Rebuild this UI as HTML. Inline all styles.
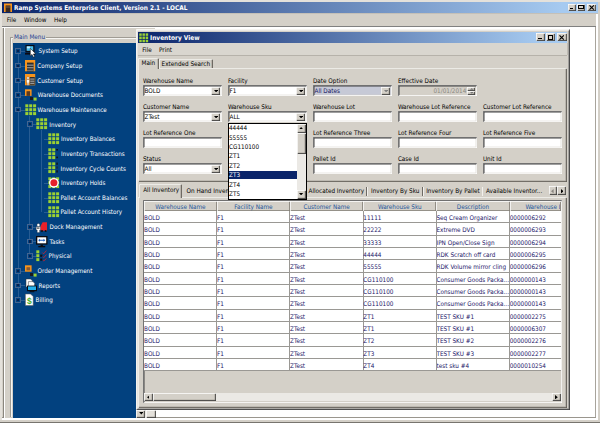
<!DOCTYPE html>
<html><head><meta charset="utf-8"><title>Ramp Systems Enterprise Client</title>
<style>
html,body{margin:0;padding:0;background:#d4d0c8;overflow:hidden}
#root{position:relative;width:600px;height:423px;overflow:hidden;font-family:"DejaVu Sans Condensed","Liberation Sans",sans-serif;font-size:6.33px}
#root div,#root svg{position:absolute}
.t{white-space:nowrap}
.btn{background:#d4d0c8;box-shadow:inset 0.7px 0.7px 0 #fff, inset -0.65px -0.65px 0 #404040, inset -1.3px -1.3px 0 #8a867e}
</style></head><body><div id="root">
<div class="" style="left:0px;top:0px;width:600px;height:423px;background:#d4d0c8"></div>
<div class="" style="left:0px;top:0px;width:2px;height:423px;background:#e4e1db"></div>
<div class="" style="left:0px;top:0px;width:600px;height:1.6px;background:#e4e1db"></div>
<div class="" style="left:2px;top:2px;width:596px;height:11.2px;background:linear-gradient(90deg,#0a246a 0%,#a6caf0 94%)"></div>
<div class="" style="left:2px;top:13.2px;width:596px;height:0.8px;background:#c4c0b8"></div>
<svg class="a" style="left:4px;top:3px" width="9" height="10" viewBox="0 0 9 10"><rect x="0" y="0.5" width="8" height="8.5" fill="#f7941d"/><rect x="1.6" y="2.4" width="4.8" height="6.6" fill="#3a2a20"/><rect x="1.6" y="3.6" width="4.8" height="0.8" fill="#8a6a50"/></svg>
<div class="t" style="left:14px;top:2.60px;line-height:10px;font-size:6.45px;color:#fff;font-weight:bold;">Ramp Systems Enterprise Client, Version 2.1 - LOCAL</div>
<div class="a btn" style="left:567.5px;top:3.7px;width:8px;height:7.5px"></div>
<div class="a btn" style="left:577px;top:3.7px;width:8.4px;height:7.5px"></div>
<div class="a btn" style="left:587.2px;top:3.7px;width:9px;height:7.5px"></div>
<div class="a" style="left:569.5px;top:8.1px;width:3.4px;height:1.3px;background:#000"></div>
<div class="a" style="left:578.3px;top:4.9px;width:5.4px;height:4.5px;border:0.6px solid #000;border-top:1.3px solid #000;box-sizing:border-box"></div>
<svg class="a" style="left:588.50px;top:4.75px" width="5.4" height="5" viewBox="0 0 5.4 5"><path d="M0.5 0.4 L4.9 4.6 M4.9 0.4 L0.5 4.6" stroke="#000" stroke-width="1.15"/></svg>
<div class="t" style="left:6.8px;top:15.20px;line-height:10px;font-size:6.33px;color:#000;">File</div>
<div class="t" style="left:24px;top:15.20px;line-height:10px;font-size:6.33px;color:#000;">Window</div>
<div class="t" style="left:54px;top:15.20px;line-height:10px;font-size:6.33px;color:#000;">Help</div>
<div class="" style="left:2px;top:25.6px;width:596px;height:0.9px;background:#808080"></div>
<div class="" style="left:2px;top:26.5px;width:596px;height:1.5px;background:#fff"></div>
<div class="" style="left:3px;top:28px;width:592px;height:390px;background:#fff"></div>
<div class="" style="left:595px;top:27px;width:1.4px;height:392px;background:#a8a49c"></div>
<div class="" style="left:2px;top:417.4px;width:596px;height:0.9px;background:#9a968e"></div>
<div class="" style="left:2px;top:418.3px;width:596px;height:1.7px;background:#fff"></div>
<div class="" style="left:0px;top:420px;width:600px;height:3px;background:#d4d0c8"></div>
<div class="" style="left:0px;top:422.2px;width:600px;height:0.8px;background:#77746e"></div>
<div class="" style="left:596px;top:14px;width:1.5px;height:406px;background:#fff"></div>
<div class="" style="left:3px;top:28px;width:152px;height:390px;background:#d4d0c8"></div>
<div class="" style="left:3px;top:28px;width:1px;height:390px;background:#8a867e"></div>
<div class="" style="left:4px;top:28px;width:1.4px;height:390px;background:#fff"></div>
<div class="" style="left:9.5px;top:37px;width:139px;height:380.4px;border:0.9px solid #a09c94;border-bottom:none;box-shadow:1px 1px 0 #f6f5f2 inset, 1px 0 0 #f6f5f2;box-sizing:border-box;"></div>
<div class="" style="left:13px;top:33px;width:32.5px;height:8px;background:#d4d0c8"></div>
<div class="t" style="left:14px;top:31.90px;line-height:10px;font-size:6.33px;color:#1c3f94;">Main Menu</div>
<div class="" style="left:12.7px;top:43.4px;width:123.6px;height:374.2px;background:#02417f"></div>
<div class="" style="left:136px;top:43px;width:9.5px;height:375px;background:#e9e7e2"></div>
<div class="a btn" style="left:136.3px;top:409.6px;width:9px;height:8px"></div>
<svg class="a" style="left:138.6px;top:412.4px" width="4.6" height="2.6" viewBox="0 0 5 3"><path d="M0 0 L5 0 L2.5 3 Z" fill="#000"/></svg>
<div class="a btn" style="left:145.6px;top:409.6px;width:10px;height:8px;background:#e4e1db"></div>
<div class="" style="left:17.7px;top:51.0px;width:0.7px;height:249.05px;background:#7f9cc4;opacity:.3"></div>
<div class="" style="left:29.4px;top:115.6px;width:0.7px;height:140.50000000000003px;background:#7f9cc4;opacity:.3"></div>
<div class="" style="left:41.0px;top:130.25px;width:0.7px;height:81.9px;background:#7f9cc4;opacity:.3"></div>
<div class="" style="left:20.6px;top:51.0px;width:4.0px;height:0.7px;background:#7f9cc4;opacity:.3"></div>
<div class="" style="left:15.299999999999999px;top:48.2px;width:5.6px;height:5.6px;border:0.8px solid #456590;background:#02417f;box-sizing:border-box"></div>
<div class="" style="left:16.8px;top:49.9px;width:2.6px;height:2.2px;background:#07214f"></div>
<svg class="a" style="left:24.6px;top:45.10px;overflow:visible" width="12" height="12" viewBox="0 0 12 12"><rect x="0.5" y="0" width="9" height="7.5" fill="#0a0a14"/><rect x="1.6" y="1.2" width="6.6" height="4.6" fill="#4cc0ee"/><rect x="1.9" y="1.5" width="3" height="1.8" fill="#c8ecfa"/><rect x="0" y="8" width="10" height="1.6" fill="#0a0a14"/><path d="M5.3 3.4 L5.3 11 L7 9.4 L8.4 12.2 L9.7 11.6 L8.4 9 L10.8 8.8 Z" fill="#fff" stroke="#000" stroke-width="0.5"/></svg>
<div class="t" style="left:38.5px;top:46.30px;line-height:10px;font-size:6.25px;color:#fff;">System Setup</div>
<div class="" style="left:20.6px;top:65.65px;width:4.0px;height:0.7px;background:#7f9cc4;opacity:.3"></div>
<div class="" style="left:15.299999999999999px;top:62.85000000000001px;width:5.6px;height:5.6px;border:0.8px solid #456590;background:#02417f;box-sizing:border-box"></div>
<div class="" style="left:16.8px;top:64.55000000000001px;width:2.6px;height:2.2px;background:#07214f"></div>
<svg class="a" style="left:24.6px;top:59.75px;overflow:visible" width="12" height="12" viewBox="0 0 12 12"><rect x="0" y="0" width="10.2" height="11.3" fill="#f7941d"/><rect x="2" y="2.6" width="6.6" height="8.9" fill="#2e2e2e"/><rect x="2" y="4.6" width="6.6" height="1.1" fill="#a0a0a0"/><rect x="2" y="7.2" width="6.6" height="1.1" fill="#a0a0a0"/><rect x="2" y="9.8" width="6.6" height="0.9" fill="#909090"/></svg>
<div class="t" style="left:37.3px;top:60.95px;line-height:10px;font-size:6.25px;color:#fff;">Company Setup</div>
<div class="" style="left:20.6px;top:80.3px;width:4.0px;height:0.7px;background:#7f9cc4;opacity:.3"></div>
<div class="" style="left:15.299999999999999px;top:77.5px;width:5.6px;height:5.6px;border:0.8px solid #456590;background:#02417f;box-sizing:border-box"></div>
<div class="" style="left:16.8px;top:79.2px;width:2.6px;height:2.2px;background:#07214f"></div>
<svg class="a" style="left:24.6px;top:74.40px;overflow:visible" width="12" height="12" viewBox="0 0 12 12"><rect x="0" y="0" width="10.2" height="11.3" fill="#f7941d"/><rect x="4.8" y="3" width="5" height="7.8" fill="#2e2e2e"/><rect x="5.2" y="4.6" width="4.2" height="0.9" fill="#c8c8c8"/><rect x="5.2" y="6.7" width="4.2" height="0.9" fill="#c8c8c8"/><rect x="5.2" y="8.8" width="4.2" height="0.9" fill="#c8c8c8"/><circle cx="3" cy="4" r="1.25" fill="#fff" stroke="#3a2a1a" stroke-width="0.3"/><path d="M1.4 5.6 L4.6 5.6 L4.3 8.8 L3.8 8.8 L3.8 11.2 L2.2 11.2 L2.2 8.8 L1.7 8.8 Z" fill="#fff" stroke="#3a2a1a" stroke-width="0.3"/></svg>
<div class="t" style="left:37.3px;top:75.60px;line-height:10px;font-size:6.25px;color:#fff;">Customer Setup</div>
<div class="" style="left:20.6px;top:94.95px;width:4.0px;height:0.7px;background:#7f9cc4;opacity:.3"></div>
<div class="" style="left:15.299999999999999px;top:92.15px;width:5.6px;height:5.6px;border:0.8px solid #456590;background:#02417f;box-sizing:border-box"></div>
<div class="" style="left:16.8px;top:93.85000000000001px;width:2.6px;height:2.2px;background:#07214f"></div>
<svg class="a" style="left:24.6px;top:89.05px;overflow:visible" width="12" height="12" viewBox="0 0 12 12"><rect x="0" y="0.3" width="6.6" height="6.6" fill="#f7941d"/><rect x="1.5" y="2.2" width="3.6" height="4.7" fill="#5a3a20"/><rect x="5" y="8" width="3" height="3" fill="#19191f"/><rect x="8.6" y="8.6" width="3" height="3" fill="#9bd133"/></svg>
<div class="t" style="left:37.8px;top:90.25px;line-height:10px;font-size:6.25px;color:#fff;">Warehouse Documents</div>
<div class="" style="left:20.6px;top:109.6px;width:4.0px;height:0.7px;background:#7f9cc4;opacity:.3"></div>
<div class="" style="left:15.299999999999999px;top:106.8px;width:5.6px;height:5.6px;border:0.8px solid #456590;background:#02417f;box-sizing:border-box"></div>
<div class="" style="left:16.8px;top:108.5px;width:2.6px;height:2.2px;background:#07214f"></div>
<svg class="a" style="left:24.6px;top:103.70px;overflow:visible" width="12" height="12" viewBox="0 0 12 12"><rect x="0.3" y="0.3" width="3" height="3" fill="#9bd133"/><rect x="4.2" y="0.3" width="3" height="3" fill="#9bd133"/><rect x="8.1" y="0.3" width="3" height="3" fill="#9bd133"/><rect x="0.3" y="4.2" width="3" height="3" fill="#9bd133"/><rect x="4.2" y="4.2" width="3" height="3" fill="#9bd133"/><rect x="8.1" y="4.2" width="3" height="3" fill="#9bd133"/><rect x="0.3" y="8.1" width="3" height="3" fill="#9bd133"/><rect x="4.2" y="8.1" width="3" height="3" fill="#9bd133"/><rect x="8.1" y="8.1" width="3" height="3" fill="#9bd133"/></svg>
<div class="t" style="left:37.6px;top:104.90px;line-height:10px;font-size:6.25px;color:#fff;">Warehouse Maintenance</div>
<div class="" style="left:32.3px;top:124.25px;width:3.9000000000000057px;height:0.7px;background:#7f9cc4;opacity:.3"></div>
<div class="" style="left:26.999999999999996px;top:121.45px;width:5.6px;height:5.6px;border:0.8px solid #456590;background:#02417f;box-sizing:border-box"></div>
<div class="" style="left:28.499999999999996px;top:123.15px;width:2.6px;height:2.2px;background:#07214f"></div>
<svg class="a" style="left:36.2px;top:118.35px;overflow:visible" width="12" height="12" viewBox="0 0 12 12"><rect x="0.3" y="0.3" width="3" height="3" fill="#9bd133"/><rect x="4.2" y="0.3" width="3" height="3" fill="#9bd133"/><rect x="8.1" y="0.3" width="3" height="3" fill="#9bd133"/><rect x="0.3" y="4.2" width="3" height="3" fill="#9bd133"/><rect x="4.2" y="4.2" width="3" height="3" fill="#9bd133"/><rect x="8.1" y="4.2" width="3" height="3" fill="#9bd133"/><rect x="0.3" y="8.1" width="3" height="3" fill="#9bd133"/><rect x="4.2" y="8.1" width="3" height="3" fill="#9bd133"/><rect x="8.1" y="8.1" width="3" height="3" fill="#9bd133"/></svg>
<div class="t" style="left:49.3px;top:119.55px;line-height:10px;font-size:6.25px;color:#fff;">Inventory</div>
<div class="" style="left:44.0px;top:138.9px;width:3.799999999999997px;height:0.7px;background:#7f9cc4;opacity:.3"></div>
<svg class="a" style="left:47.8px;top:133.00px;overflow:visible" width="12" height="12" viewBox="0 0 12 12"><rect x="0.3" y="0.3" width="3" height="3" fill="#9bd133"/><rect x="4.2" y="0.3" width="3" height="3" fill="#9bd133"/><rect x="8.1" y="0.3" width="3" height="3" fill="#9bd133"/><rect x="0.3" y="4.2" width="3" height="3" fill="#9bd133"/><rect x="4.2" y="4.2" width="3" height="3" fill="#9bd133"/><rect x="8.1" y="4.2" width="3" height="3" fill="#9bd133"/><rect x="0.3" y="8.1" width="3" height="3" fill="#9bd133"/><rect x="4.2" y="8.1" width="3" height="3" fill="#9bd133"/><rect x="8.1" y="8.1" width="3" height="3" fill="#9bd133"/></svg>
<div class="t" style="left:61px;top:134.20px;line-height:10px;font-size:6.25px;color:#fff;">Inventory Balances</div>
<div class="" style="left:44.0px;top:153.55px;width:3.799999999999997px;height:0.7px;background:#7f9cc4;opacity:.3"></div>
<svg class="a" style="left:47.8px;top:147.65px;overflow:visible" width="12" height="12" viewBox="0 0 12 12"><rect x="0.3" y="0.3" width="3" height="3" fill="#9bd133"/><rect x="4.2" y="0.3" width="3" height="3" fill="#9bd133"/><rect x="0.3" y="4.2" width="3" height="3" fill="#9bd133"/><rect x="4.2" y="4.2" width="3" height="3" fill="#9bd133"/><rect x="0.3" y="8.1" width="3" height="3" fill="#9bd133"/><rect x="4.2" y="8.1" width="3" height="3" fill="#9bd133"/><rect x="8.3" y="1" width="1.6" height="1.6" fill="#111"/><rect x="8.3" y="8.6" width="1.6" height="1.6" fill="#111"/></svg>
<div class="t" style="left:61px;top:148.85px;line-height:10px;font-size:6.25px;color:#fff;">Inventory Transactions</div>
<div class="" style="left:44.0px;top:168.2px;width:3.799999999999997px;height:0.7px;background:#7f9cc4;opacity:.3"></div>
<svg class="a" style="left:47.8px;top:162.30px;overflow:visible" width="12" height="12" viewBox="0 0 12 12"><rect x="0.3" y="0.3" width="3" height="3" fill="#9bd133"/><rect x="4.2" y="0.3" width="3" height="3" fill="#9bd133"/><rect x="0.3" y="4.2" width="3" height="3" fill="#9bd133"/><rect x="4.2" y="4.2" width="3" height="3" fill="#9bd133"/><rect x="0.3" y="8.1" width="3" height="3" fill="#9bd133"/><rect x="4.2" y="8.1" width="3" height="3" fill="#9bd133"/><rect x="8.4" y="0.6" width="1.3" height="2.2" fill="#111"/><rect x="8.4" y="4.4" width="1.3" height="2.2" fill="#223"/><rect x="8.4" y="8.3" width="1.3" height="2.2" fill="#111"/></svg>
<div class="t" style="left:60.5px;top:163.50px;line-height:10px;font-size:6.25px;color:#fff;">Inventory Cycle Counts</div>
<div class="" style="left:44.0px;top:182.85px;width:3.799999999999997px;height:0.7px;background:#7f9cc4;opacity:.3"></div>
<svg class="a" style="left:47.8px;top:176.95px;overflow:visible" width="12" height="12" viewBox="0 0 12 12"><rect x="0.3" y="0.3" width="3" height="3" fill="#9bd133"/><rect x="4.2" y="0.3" width="3" height="3" fill="#9bd133"/><rect x="8.1" y="0.3" width="3" height="3" fill="#9bd133"/><rect x="0.3" y="4.2" width="3" height="3" fill="#9bd133"/><rect x="4.2" y="4.2" width="3" height="3" fill="#9bd133"/><rect x="8.1" y="4.2" width="3" height="3" fill="#9bd133"/><rect x="0.3" y="8.1" width="3" height="3" fill="#9bd133"/><rect x="4.2" y="8.1" width="3" height="3" fill="#9bd133"/><rect x="8.1" y="8.1" width="3" height="3" fill="#9bd133"/><circle cx="5.9" cy="5.8" r="4.9" fill="#fff"/><circle cx="5.9" cy="5.8" r="3.5" fill="#e8202a"/></svg>
<div class="t" style="left:61px;top:178.15px;line-height:10px;font-size:6.25px;color:#fff;">Inventory Holds</div>
<div class="" style="left:44.0px;top:197.5px;width:3.799999999999997px;height:0.7px;background:#7f9cc4;opacity:.3"></div>
<svg class="a" style="left:47.8px;top:191.60px;overflow:visible" width="12" height="12" viewBox="0 0 12 12"><rect x="0.3" y="0.3" width="3" height="3" fill="#9bd133"/><rect x="4.2" y="0.3" width="3" height="3" fill="#9bd133"/><rect x="8.1" y="0.3" width="3" height="3" fill="#9bd133"/><rect x="0.3" y="4.2" width="3" height="3" fill="#9bd133"/><rect x="4.2" y="4.2" width="3" height="3" fill="#9bd133"/><rect x="8.1" y="4.2" width="3" height="3" fill="#9bd133"/><rect x="0.3" y="8.1" width="3" height="3" fill="#9bd133"/><rect x="4.2" y="8.1" width="3" height="3" fill="#9bd133"/><rect x="8.1" y="8.1" width="3" height="3" fill="#9bd133"/></svg>
<div class="t" style="left:60.5px;top:192.80px;line-height:10px;font-size:6.25px;color:#fff;">Pallet Account Balances</div>
<div class="" style="left:44.0px;top:212.15px;width:3.799999999999997px;height:0.7px;background:#7f9cc4;opacity:.3"></div>
<svg class="a" style="left:47.8px;top:206.25px;overflow:visible" width="12" height="12" viewBox="0 0 12 12"><rect x="0.3" y="0.3" width="3" height="3" fill="#9bd133"/><rect x="4.2" y="0.3" width="3" height="3" fill="#9bd133"/><rect x="8.1" y="0.3" width="3" height="3" fill="#9bd133"/><rect x="0.3" y="4.2" width="3" height="3" fill="#9bd133"/><rect x="4.2" y="4.2" width="3" height="3" fill="#9bd133"/><rect x="8.1" y="4.2" width="3" height="3" fill="#9bd133"/><rect x="0.3" y="8.1" width="3" height="3" fill="#9bd133"/><rect x="4.2" y="8.1" width="3" height="3" fill="#9bd133"/><rect x="8.1" y="8.1" width="3" height="3" fill="#9bd133"/></svg>
<div class="t" style="left:60.5px;top:207.45px;line-height:10px;font-size:6.25px;color:#fff;">Pallet Account History</div>
<div class="" style="left:32.3px;top:226.8px;width:3.9000000000000057px;height:0.7px;background:#7f9cc4;opacity:.3"></div>
<div class="" style="left:26.999999999999996px;top:224.0px;width:5.6px;height:5.6px;border:0.8px solid #456590;background:#02417f;box-sizing:border-box"></div>
<div class="" style="left:28.499999999999996px;top:225.70000000000002px;width:2.6px;height:2.2px;background:#07214f"></div>
<svg class="a" style="left:36.2px;top:220.90px;overflow:visible" width="12" height="12" viewBox="0 0 12 12"><circle cx="2.4" cy="4" r="1.5" fill="#fff" stroke="#222" stroke-width="0.3"/><path d="M0.2 5.8 L4.6 5.8 L4.6 9 L3.6 9 L3.6 11.6 L1.2 11.6 L1.2 9 L0.2 9 Z" fill="#fff" stroke="#222" stroke-width="0.3"/><path d="M6.6 1.2 L11 1.2 L11 9.8 L4.6 9.8 L4.6 5 Z" fill="#e8202a"/><rect x="0.9" y="6.6" width="2.6" height="1" fill="#222"/><circle cx="6" cy="10" r="1" fill="#111"/><circle cx="9.6" cy="10" r="1" fill="#111"/></svg>
<div class="t" style="left:49.6px;top:222.10px;line-height:10px;font-size:6.25px;color:#fff;">Dock Management</div>
<div class="" style="left:32.3px;top:241.45000000000002px;width:3.9000000000000057px;height:0.7px;background:#7f9cc4;opacity:.3"></div>
<div class="" style="left:26.999999999999996px;top:238.65px;width:5.6px;height:5.6px;border:0.8px solid #456590;background:#02417f;box-sizing:border-box"></div>
<div class="" style="left:28.499999999999996px;top:240.35000000000002px;width:2.6px;height:2.2px;background:#07214f"></div>
<svg class="a" style="left:36.2px;top:235.55px;overflow:visible" width="12" height="12" viewBox="0 0 12 12"><rect x="0" y="0" width="11.5" height="8.6" fill="#0a0a10"/><rect x="1.3" y="1.3" width="8.9" height="6" fill="#fff"/><path d="M2.2 4.3 L4 2.8 L4 3.8 L7.5 3.8 L7.5 2.8 L9.3 4.3 L7.5 5.8 L7.5 4.8 L4 4.8 L4 5.8 Z" fill="#1c5fc0"/><rect x="4.6" y="8.6" width="2.3" height="1.4" fill="#0a0a10"/><rect x="2.3" y="10" width="6.9" height="1.3" fill="#0a0a10"/></svg>
<div class="t" style="left:49.6px;top:236.75px;line-height:10px;font-size:6.25px;color:#fff;">Tasks</div>
<div class="" style="left:32.3px;top:256.1px;width:3.9000000000000057px;height:0.7px;background:#7f9cc4;opacity:.3"></div>
<div class="" style="left:26.999999999999996px;top:253.3px;width:5.6px;height:5.6px;border:0.8px solid #456590;background:#02417f;box-sizing:border-box"></div>
<div class="" style="left:28.499999999999996px;top:255.00000000000003px;width:2.6px;height:2.2px;background:#07214f"></div>
<svg class="a" style="left:36.2px;top:250.20px;overflow:visible" width="12" height="12" viewBox="0 0 12 12"><rect x="0.3" y="0.3" width="3" height="3" fill="#9bd133"/><rect x="0.3" y="4.2" width="3" height="3" fill="#9bd133"/><rect x="0.3" y="8.1" width="3" height="3" fill="#9bd133"/><rect x="4.2" y="4.6" width="2.2" height="2.2" fill="#111"/><rect x="4.2" y="8.5" width="2.2" height="2.2" fill="#111"/><path d="M6.4 2.6 L7.6 3.8 L10.4 0.6 M6.8 6.6 L7.8 7.6 L10.4 4.6 M6.8 10.2 L7.8 11 L10.4 8.4" stroke="#d8202a" stroke-width="0.8" fill="none"/></svg>
<div class="t" style="left:48.6px;top:251.40px;line-height:10px;font-size:6.25px;color:#fff;">Physical</div>
<div class="" style="left:20.6px;top:270.75px;width:4.0px;height:0.7px;background:#7f9cc4;opacity:.3"></div>
<div class="" style="left:15.299999999999999px;top:267.95px;width:5.6px;height:5.6px;border:0.8px solid #456590;background:#02417f;box-sizing:border-box"></div>
<div class="" style="left:16.8px;top:269.65px;width:2.6px;height:2.2px;background:#07214f"></div>
<svg class="a" style="left:24.6px;top:264.85px;overflow:visible" width="12" height="12" viewBox="0 0 12 12"><rect x="0" y="0.3" width="6.6" height="6.4" fill="#f7941d"/><rect x="1.5" y="2.2" width="3.6" height="3.2" fill="#8a5a30"/><rect x="5" y="8" width="3" height="3" fill="#19191f"/><rect x="8.6" y="8.6" width="3" height="3" fill="#9bd133"/></svg>
<div class="t" style="left:37.6px;top:266.05px;line-height:10px;font-size:6.25px;color:#fff;">Order Management</div>
<div class="" style="left:20.6px;top:285.4px;width:4.0px;height:0.7px;background:#7f9cc4;opacity:.3"></div>
<div class="" style="left:15.299999999999999px;top:282.59999999999997px;width:5.6px;height:5.6px;border:0.8px solid #456590;background:#02417f;box-sizing:border-box"></div>
<div class="" style="left:16.8px;top:284.29999999999995px;width:2.6px;height:2.2px;background:#07214f"></div>
<svg class="a" style="left:24.6px;top:279.50px;overflow:visible" width="12" height="12" viewBox="0 0 12 12"><path d="M1 -1 L5.6 -1 L7.4 0.8 L7.4 7 L1 7 Z" fill="#fff" stroke="#333" stroke-width="0.5"/><path d="M3.4 1.6 L8 1.6 L9.6 3.2 L9.6 8 L3.4 8 Z" fill="#fff" stroke="#333" stroke-width="0.5"/><rect x="2" y="5.6" width="10" height="5.6" fill="#0a0a10"/><rect x="3" y="6.4" width="8" height="3.6" fill="#25b0ea"/><rect x="4.6" y="11.2" width="4.8" height="1" fill="#0a0a10"/></svg>
<div class="t" style="left:38.6px;top:280.70px;line-height:10px;font-size:6.25px;color:#fff;">Reports</div>
<div class="" style="left:20.6px;top:300.05px;width:4.0px;height:0.7px;background:#7f9cc4;opacity:.3"></div>
<div class="" style="left:15.299999999999999px;top:297.25px;width:5.6px;height:5.6px;border:0.8px solid #456590;background:#02417f;box-sizing:border-box"></div>
<div class="" style="left:16.8px;top:298.95px;width:2.6px;height:2.2px;background:#07214f"></div>
<svg class="a" style="left:24.6px;top:294.15px;overflow:visible" width="12" height="12" viewBox="0 0 12 12"><path d="M0.4 0 L5.6 0 L8.2 2.6 L8.2 11.5 L0.4 11.5 Z" fill="#fff" stroke="#555" stroke-width="0.5"/><text x="2" y="9.6" font-size="8.5" font-weight="bold" fill="#4cae2a" font-family="Liberation Sans,sans-serif">$</text></svg>
<div class="t" style="left:35.6px;top:295.35px;line-height:10px;font-size:6.25px;color:#fff;">Billing</div>
<div class="" style="left:136.3px;top:28.7px;width:433.90000000000003px;height:381.7px;background:#d4d0c8;box-shadow:inset 0.6px 0.6px 0 #ece9e4, inset -0.8px -0.8px 0 #404040, inset 1.4px 1.4px 0 #fff, inset -1.6px -1.6px 0 #808080"></div>
<div class="" style="left:138.3px;top:31.6px;width:429px;height:11.8px;background:linear-gradient(90deg,#0a246a 0%,#a6caf0 94%)"></div>
<svg class="a" style="left:139.3px;top:33px" width="9.4" height="9.6" viewBox="0 0 11.4 11.4"><rect x="0.3" y="0.3" width="3" height="3" fill="#9bd133"/><rect x="4.2" y="0.3" width="3" height="3" fill="#9bd133"/><rect x="8.1" y="0.3" width="3" height="3" fill="#9bd133"/><rect x="0.3" y="4.2" width="3" height="3" fill="#9bd133"/><rect x="4.2" y="4.2" width="3" height="3" fill="#9bd133"/><rect x="8.1" y="4.2" width="3" height="3" fill="#9bd133"/><rect x="0.3" y="8.1" width="3" height="3" fill="#9bd133"/><rect x="4.2" y="8.1" width="3" height="3" fill="#9bd133"/><rect x="8.1" y="8.1" width="3" height="3" fill="#9bd133"/></svg>
<div class="t" style="left:150px;top:32.80px;line-height:10px;font-size:6.5px;color:#fff;font-weight:bold;">Inventory View</div>
<div class="a btn" style="left:536.4px;top:33.3px;width:8.3px;height:8px"></div>
<div class="a btn" style="left:546.2px;top:33.3px;width:9px;height:8px"></div>
<div class="a btn" style="left:557.4px;top:33.3px;width:9.3px;height:8px"></div>
<div class="a" style="left:538.4px;top:38.199999999999996px;width:3.4px;height:1.3px;background:#000"></div>
<div class="a" style="left:547.5px;top:34.5px;width:5.4px;height:5px;border:0.6px solid #000;border-top:1.3px solid #000;box-sizing:border-box"></div>
<svg class="a" style="left:558.85px;top:34.60px" width="5.4" height="5" viewBox="0 0 5.4 5"><path d="M0.5 0.4 L4.9 4.6 M4.9 0.4 L0.5 4.6" stroke="#000" stroke-width="1.15"/></svg>
<div class="" style="left:138.3px;top:43.4px;width:429px;height:12px;background:#d9d6cf"></div>
<div class="" style="left:138.3px;top:55.1px;width:429px;height:0.8px;background:#b6b2aa"></div>
<div class="" style="left:567px;top:43.4px;width:0.7px;height:12px;background:#c0bcb4"></div>
<div class="t" style="left:142.3px;top:45.20px;line-height:10px;font-size:6.33px;color:#000;">File</div>
<div class="t" style="left:159px;top:45.20px;line-height:10px;font-size:6.33px;color:#000;">Print</div>
<div class="" style="left:138px;top:68.3px;width:429.4px;height:113.7px;background:#d4d0c8;box-shadow:inset 0.8px 0.8px 0 #f4f3ef, inset -0.8px -0.8px 0 #605c56, inset -1.6px -1.6px 0 #a8a49c;"></div>
<div class="" style="left:159px;top:58.9px;width:53.8px;height:9.5px;background:#d4d0c8;border-radius:1.2px 1.2px 0 0;box-shadow:inset 0.8px 0.8px 0 #f4f3ef, inset -0.8px 0 0 #605c56, inset -1.6px 0 0 #a8a49c"></div>
<div class="t" style="left:161.6px;top:59.45px;line-height:10px;font-size:6.33px;color:#000;">Extended Search</div>
<div class="" style="left:138px;top:57.5px;width:21px;height:11.799999999999999px;background:#d4d0c8;border-radius:1.2px 1.2px 0 0;box-shadow:inset 0.8px 0.8px 0 #f4f3ef, inset -0.8px 0 0 #605c56, inset -1.6px 0 0 #a8a49c"></div>
<div class="t" style="left:141.6px;top:58.10px;line-height:10px;font-size:6.33px;color:#000;">Main</div>
<div class="t" style="left:142.9px;top:76.20px;line-height:10px;font-size:6.33px;color:#000;">Warehouse Name</div>
<div class="" style="left:143px;top:85.3px;width:78.5px;height:11px;background:#fff;box-shadow:inset 0.8px 0.8px 0 #808080, inset -0.7px -0.7px 0 #fff, inset 1.5px 1.5px 0 #404040, inset -1.3px -1.3px 0 #d4d0c8"></div>
<div class="t" style="left:144.5px;top:86.00px;line-height:10px;font-size:6.33px;color:#000;">BOLD</div>
<div class="a btn" style="left:211.2px;top:86.8px;width:9px;height:8.2px"></div>
<svg class="a" style="left:213.7px;top:89.89999999999999px" width="4.2" height="2.4" viewBox="0 0 4.2 2.4"><path d="M0 0 L4.2 0 L2.1 2.4 Z" fill="#000"/></svg>
<div class="t" style="left:227.9px;top:76.20px;line-height:10px;font-size:6.33px;color:#000;">Facility</div>
<div class="" style="left:228px;top:85.3px;width:78.5px;height:11px;background:#fff;box-shadow:inset 0.8px 0.8px 0 #808080, inset -0.7px -0.7px 0 #fff, inset 1.5px 1.5px 0 #404040, inset -1.3px -1.3px 0 #d4d0c8"></div>
<div class="t" style="left:229.5px;top:86.00px;line-height:10px;font-size:6.33px;color:#000;">F1</div>
<div class="a btn" style="left:296.2px;top:86.8px;width:9px;height:8.2px"></div>
<svg class="a" style="left:298.7px;top:89.89999999999999px" width="4.2" height="2.4" viewBox="0 0 4.2 2.4"><path d="M0 0 L4.2 0 L2.1 2.4 Z" fill="#000"/></svg>
<div class="t" style="left:312.9px;top:76.20px;line-height:10px;font-size:6.33px;color:#000;">Date Option</div>
<div class="" style="left:313px;top:85.3px;width:78.5px;height:11px;background:#c6c9d6;box-shadow:inset 0.8px 0.8px 0 #808080, inset -0.7px -0.7px 0 #fff, inset 1.5px 1.5px 0 #404040, inset -1.3px -1.3px 0 #d4d0c8"></div>
<div class="t" style="left:314.5px;top:86.00px;line-height:10px;font-size:6.33px;color:#15155f;">All Dates</div>
<div class="a btn" style="left:381.2px;top:86.8px;width:9px;height:8.2px"></div>
<svg class="a" style="left:383.7px;top:89.89999999999999px" width="4.2" height="2.4" viewBox="0 0 4.2 2.4"><path d="M0 0 L4.2 0 L2.1 2.4 Z" fill="#808080"/></svg>
<div class="t" style="left:397.9px;top:76.20px;line-height:10px;font-size:6.33px;color:#000;">Effective Date</div>
<div class="" style="left:398px;top:85.3px;width:78.5px;height:11px;background:#d4d0c8;box-shadow:inset 0.8px 0.8px 0 #808080, inset -0.7px -0.7px 0 #fff, inset 1.5px 1.5px 0 #404040, inset -1.3px -1.3px 0 #d4d0c8"></div>
<div class="t" style="left:433.5px;top:86.00px;line-height:10px;font-size:6.33px;color:#8a8780;">01/01/2014</div>
<div class="a btn" style="left:467.3px;top:86.7px;width:8.2px;height:4.3px"></div>
<div class="a btn" style="left:467.3px;top:91px;width:8.2px;height:4.2px"></div>
<svg class="a" style="left:469.6px;top:88px" width="3.6" height="1.8" viewBox="0 0 3.6 1.8"><path d="M0 1.8 L3.6 1.8 L1.8 0 Z" fill="#777"/></svg>
<svg class="a" style="left:469.6px;top:92.3px" width="3.6" height="1.8" viewBox="0 0 3.6 1.8"><path d="M0 0 L3.6 0 L1.8 1.8 Z" fill="#777"/></svg>
<div class="t" style="left:142.9px;top:102.20px;line-height:10px;font-size:6.33px;color:#000;">Customer Name</div>
<div class="" style="left:143px;top:111.3px;width:78.5px;height:11px;background:#fff;box-shadow:inset 0.8px 0.8px 0 #808080, inset -0.7px -0.7px 0 #fff, inset 1.5px 1.5px 0 #404040, inset -1.3px -1.3px 0 #d4d0c8"></div>
<div class="t" style="left:144.5px;top:112.00px;line-height:10px;font-size:6.33px;color:#000;">ZTest</div>
<div class="a btn" style="left:211.2px;top:112.8px;width:9px;height:8.2px"></div>
<svg class="a" style="left:213.7px;top:115.89999999999999px" width="4.2" height="2.4" viewBox="0 0 4.2 2.4"><path d="M0 0 L4.2 0 L2.1 2.4 Z" fill="#000"/></svg>
<div class="t" style="left:227.9px;top:102.20px;line-height:10px;font-size:6.33px;color:#000;">Warehouse Sku</div>
<div class="" style="left:228px;top:111.3px;width:78.5px;height:11px;background:#fff;box-shadow:inset 0.8px 0.8px 0 #808080, inset -0.7px -0.7px 0 #fff, inset 1.5px 1.5px 0 #404040, inset -1.3px -1.3px 0 #d4d0c8"></div>
<div class="t" style="left:229.5px;top:112.00px;line-height:10px;font-size:6.33px;color:#000;">ALL</div>
<div class="a btn" style="left:296.2px;top:112.8px;width:9px;height:8.2px"></div>
<svg class="a" style="left:298.7px;top:115.89999999999999px" width="4.2" height="2.4" viewBox="0 0 4.2 2.4"><path d="M0 0 L4.2 0 L2.1 2.4 Z" fill="#000"/></svg>
<div class="t" style="left:312.9px;top:102.20px;line-height:10px;font-size:6.33px;color:#000;">Warehouse Lot</div>
<div class="" style="left:313px;top:111.3px;width:78.5px;height:11px;background:#fff;box-shadow:inset 0.8px 0.8px 0 #808080, inset -0.7px -0.7px 0 #fff, inset 1.5px 1.5px 0 #404040, inset -1.3px -1.3px 0 #d4d0c8"></div>
<div class="t" style="left:397.9px;top:102.20px;line-height:10px;font-size:6.33px;color:#000;">Warehouse Lot Reference</div>
<div class="" style="left:398px;top:111.3px;width:78.5px;height:11px;background:#fff;box-shadow:inset 0.8px 0.8px 0 #808080, inset -0.7px -0.7px 0 #fff, inset 1.5px 1.5px 0 #404040, inset -1.3px -1.3px 0 #d4d0c8"></div>
<div class="t" style="left:482.9px;top:102.20px;line-height:10px;font-size:6.33px;color:#000;">Customer Lot Reference</div>
<div class="" style="left:483px;top:111.3px;width:78.5px;height:11px;background:#fff;box-shadow:inset 0.8px 0.8px 0 #808080, inset -0.7px -0.7px 0 #fff, inset 1.5px 1.5px 0 #404040, inset -1.3px -1.3px 0 #d4d0c8"></div>
<div class="t" style="left:142.9px;top:128.20px;line-height:10px;font-size:6.33px;color:#000;">Lot Reference One</div>
<div class="" style="left:143px;top:137.3px;width:78.5px;height:11px;background:#fff;box-shadow:inset 0.8px 0.8px 0 #808080, inset -0.7px -0.7px 0 #fff, inset 1.5px 1.5px 0 #404040, inset -1.3px -1.3px 0 #d4d0c8"></div>
<div class="t" style="left:227.9px;top:128.20px;line-height:10px;font-size:6.33px;color:#000;">Lot Reference Two</div>
<div class="" style="left:228px;top:137.3px;width:78.5px;height:11px;background:#fff;box-shadow:inset 0.8px 0.8px 0 #808080, inset -0.7px -0.7px 0 #fff, inset 1.5px 1.5px 0 #404040, inset -1.3px -1.3px 0 #d4d0c8"></div>
<div class="t" style="left:312.9px;top:128.20px;line-height:10px;font-size:6.33px;color:#000;">Lot Reference Three</div>
<div class="" style="left:313px;top:137.3px;width:78.5px;height:11px;background:#fff;box-shadow:inset 0.8px 0.8px 0 #808080, inset -0.7px -0.7px 0 #fff, inset 1.5px 1.5px 0 #404040, inset -1.3px -1.3px 0 #d4d0c8"></div>
<div class="t" style="left:397.9px;top:128.20px;line-height:10px;font-size:6.33px;color:#000;">Lot Reference Four</div>
<div class="" style="left:398px;top:137.3px;width:78.5px;height:11px;background:#fff;box-shadow:inset 0.8px 0.8px 0 #808080, inset -0.7px -0.7px 0 #fff, inset 1.5px 1.5px 0 #404040, inset -1.3px -1.3px 0 #d4d0c8"></div>
<div class="t" style="left:482.9px;top:128.20px;line-height:10px;font-size:6.33px;color:#000;">Lot Reference Five</div>
<div class="" style="left:483px;top:137.3px;width:78.5px;height:11px;background:#fff;box-shadow:inset 0.8px 0.8px 0 #808080, inset -0.7px -0.7px 0 #fff, inset 1.5px 1.5px 0 #404040, inset -1.3px -1.3px 0 #d4d0c8"></div>
<div class="t" style="left:142.9px;top:154.10px;line-height:10px;font-size:6.33px;color:#000;">Status</div>
<div class="" style="left:143px;top:163.2px;width:78.5px;height:11px;background:#fff;box-shadow:inset 0.8px 0.8px 0 #808080, inset -0.7px -0.7px 0 #fff, inset 1.5px 1.5px 0 #404040, inset -1.3px -1.3px 0 #d4d0c8"></div>
<div class="t" style="left:144.5px;top:163.90px;line-height:10px;font-size:6.33px;color:#000;">All</div>
<div class="a btn" style="left:211.2px;top:164.7px;width:9px;height:8.2px"></div>
<svg class="a" style="left:213.7px;top:167.79999999999998px" width="4.2" height="2.4" viewBox="0 0 4.2 2.4"><path d="M0 0 L4.2 0 L2.1 2.4 Z" fill="#000"/></svg>
<div class="t" style="left:227.9px;top:154.10px;line-height:10px;font-size:6.33px;color:#000;">Pallet Number</div>
<div class="" style="left:228px;top:163.2px;width:78.5px;height:11px;background:#fff;box-shadow:inset 0.8px 0.8px 0 #808080, inset -0.7px -0.7px 0 #fff, inset 1.5px 1.5px 0 #404040, inset -1.3px -1.3px 0 #d4d0c8"></div>
<div class="t" style="left:312.9px;top:154.10px;line-height:10px;font-size:6.33px;color:#000;">Pallet Id</div>
<div class="" style="left:313px;top:163.2px;width:78.5px;height:11px;background:#fff;box-shadow:inset 0.8px 0.8px 0 #808080, inset -0.7px -0.7px 0 #fff, inset 1.5px 1.5px 0 #404040, inset -1.3px -1.3px 0 #d4d0c8"></div>
<div class="t" style="left:397.9px;top:154.10px;line-height:10px;font-size:6.33px;color:#000;">Case Id</div>
<div class="" style="left:398px;top:163.2px;width:78.5px;height:11px;background:#fff;box-shadow:inset 0.8px 0.8px 0 #808080, inset -0.7px -0.7px 0 #fff, inset 1.5px 1.5px 0 #404040, inset -1.3px -1.3px 0 #d4d0c8"></div>
<div class="t" style="left:482.9px;top:154.10px;line-height:10px;font-size:6.33px;color:#000;">Unit Id</div>
<div class="" style="left:483px;top:163.2px;width:78.5px;height:11px;background:#fff;box-shadow:inset 0.8px 0.8px 0 #808080, inset -0.7px -0.7px 0 #fff, inset 1.5px 1.5px 0 #404040, inset -1.3px -1.3px 0 #d4d0c8"></div>
<div class="" style="left:138px;top:196.5px;width:429.4px;height:211px;background:#d4d0c8;box-shadow:inset 0.8px 0.8px 0 #f4f3ef, inset -0.8px -0.8px 0 #605c56, inset -1.6px -1.6px 0 #a8a49c;"></div>
<div class="t" style="left:186.6px;top:185.60px;line-height:10px;font-size:6.33px;color:#000;">On Hand Inventory</div>
<div class="" style="left:243px;top:186.5px;width:0.8px;height:9.5px;background:#6e6a64"></div>
<div class="" style="left:243.8px;top:186.5px;width:0.8px;height:9.5px;background:#f2f0ec"></div>
<div class="t" style="left:248px;top:185.60px;line-height:10px;font-size:6.33px;color:#000;">Available Inventory</div>
<div class="" style="left:303px;top:186.5px;width:0.8px;height:9.5px;background:#6e6a64"></div>
<div class="" style="left:303.8px;top:186.5px;width:0.8px;height:9.5px;background:#f2f0ec"></div>
<div class="t" style="left:308.5px;top:185.60px;line-height:10px;font-size:6.33px;color:#000;">Allocated Inventory</div>
<div class="" style="left:366.4px;top:186.5px;width:0.8px;height:9.5px;background:#6e6a64"></div>
<div class="" style="left:367.2px;top:186.5px;width:0.8px;height:9.5px;background:#f2f0ec"></div>
<div class="t" style="left:371px;top:185.60px;line-height:10px;font-size:6.33px;color:#000;">Inventory By Sku</div>
<div class="" style="left:422.4px;top:186.5px;width:0.8px;height:9.5px;background:#6e6a64"></div>
<div class="" style="left:423.2px;top:186.5px;width:0.8px;height:9.5px;background:#f2f0ec"></div>
<div class="t" style="left:426.2px;top:185.60px;line-height:10px;font-size:6.33px;color:#000;">Inventory By Pallet</div>
<div class="" style="left:481.5px;top:186.5px;width:0.8px;height:9.5px;background:#6e6a64"></div>
<div class="" style="left:482.3px;top:186.5px;width:0.8px;height:9.5px;background:#f2f0ec"></div>
<div class="t" style="left:486px;top:185.60px;line-height:10px;font-size:6.33px;color:#000;">Available Inventor...</div>
<div class="" style="left:548px;top:186.5px;width:0.8px;height:9.5px;background:#6e6a64"></div>
<div class="" style="left:548.8px;top:186.5px;width:0.8px;height:9.5px;background:#f2f0ec"></div>
<div class="" style="left:546px;top:184px;width:21px;height:12.4px;background:#d4d0c8"></div>
<div class="" style="left:138.6px;top:183.5px;width:43.2px;height:14.299999999999999px;background:#d4d0c8;border-radius:1.2px 1.2px 0 0;box-shadow:inset 0.8px 0.8px 0 #f4f3ef, inset -0.8px 0 0 #605c56, inset -1.6px 0 0 #a8a49c"></div>
<div class="t" style="left:143.2px;top:185.40px;line-height:10px;font-size:6.33px;color:#000;">All Inventory</div>
<div class="a btn" style="left:548.5px;top:186.4px;width:8.8px;height:8.8px"></div>
<div class="a btn" style="left:557.4px;top:186.4px;width:8.8px;height:8.8px"></div>
<svg class="a" style="left:551.4px;top:188.6px" width="2.6" height="4.4" viewBox="0 0 2.6 4.4"><path d="M2.6 0 L2.6 4.4 L0 2.2 Z" fill="#8a8680"/></svg>
<svg class="a" style="left:560.8px;top:188.6px" width="2.6" height="4.4" viewBox="0 0 2.6 4.4"><path d="M0 0 L0 4.4 L2.6 2.2 Z" fill="#000"/></svg>
<div class="" style="left:142.8px;top:200.2px;width:419.2px;height:202.40000000000003px;background:#d4d0c8;box-shadow:inset 0.8px 0.8px 0 #808080, inset -0.7px -0.7px 0 #fff, inset 1.5px 1.5px 0 #404040"></div>
<div class="" style="left:144px;top:210.9px;width:416.6px;height:160.29px;background:#fff"></div>
<div class="" style="left:144px;top:201.4px;width:72.80000000000001px;height:9.5px;background:#d4d0c8;box-shadow:inset 0.7px 0.7px 0 #fff, inset -0.8px -0.8px 0 #807c74;overflow:hidden"></div>
<div class="t" style="left:144px;top:201.75px;width:72.80000000000001px;text-align:center;line-height:10px;font-size:6.33px;color:#25569a">Warehouse Name</div>
<div class="" style="left:216.8px;top:201.4px;width:73.19999999999999px;height:9.5px;background:#d4d0c8;box-shadow:inset 0.7px 0.7px 0 #fff, inset -0.8px -0.8px 0 #807c74;overflow:hidden"></div>
<div class="t" style="left:216.8px;top:201.75px;width:73.19999999999999px;text-align:center;line-height:10px;font-size:6.33px;color:#25569a">Facility Name</div>
<div class="" style="left:290px;top:201.4px;width:73.19999999999999px;height:9.5px;background:#d4d0c8;box-shadow:inset 0.7px 0.7px 0 #fff, inset -0.8px -0.8px 0 #807c74;overflow:hidden"></div>
<div class="t" style="left:290px;top:201.75px;width:73.19999999999999px;text-align:center;line-height:10px;font-size:6.33px;color:#25569a">Customer Name</div>
<div class="" style="left:363.2px;top:201.4px;width:73.19999999999999px;height:9.5px;background:#d4d0c8;box-shadow:inset 0.7px 0.7px 0 #fff, inset -0.8px -0.8px 0 #807c74;overflow:hidden"></div>
<div class="t" style="left:363.2px;top:201.75px;width:73.19999999999999px;text-align:center;line-height:10px;font-size:6.33px;color:#25569a">Warehouse Sku</div>
<div class="" style="left:436.4px;top:201.4px;width:73.20000000000005px;height:9.5px;background:#d4d0c8;box-shadow:inset 0.7px 0.7px 0 #fff, inset -0.8px -0.8px 0 #807c74;overflow:hidden"></div>
<div class="t" style="left:436.4px;top:201.75px;width:73.20000000000005px;text-align:center;line-height:10px;font-size:6.33px;color:#25569a">Description</div>
<div class="" style="left:509.6px;top:201.4px;width:51.0px;height:9.5px;background:#d4d0c8;box-shadow:inset 0.7px 0.7px 0 #fff, inset -0.8px -0.8px 0 #807c74;overflow:hidden"></div>
<div class="t" style="left:525.4px;top:201.75px;width:34.6px;overflow:hidden;line-height:10px;font-size:6.33px;color:#25569a">Warehouse Lot</div>
<div class="" style="left:144px;top:222.33px;width:416.6px;height:1.1px;background:#9a9894"></div>
<div class="" style="left:144px;top:234.66px;width:416.6px;height:1.1px;background:#9a9894"></div>
<div class="" style="left:144px;top:246.99px;width:416.6px;height:1.1px;background:#9a9894"></div>
<div class="" style="left:144px;top:259.32000000000005px;width:416.6px;height:1.1px;background:#9a9894"></div>
<div class="" style="left:144px;top:271.65000000000003px;width:416.6px;height:1.1px;background:#9a9894"></div>
<div class="" style="left:144px;top:283.98px;width:416.6px;height:1.1px;background:#9a9894"></div>
<div class="" style="left:144px;top:296.31000000000006px;width:416.6px;height:1.1px;background:#9a9894"></div>
<div class="" style="left:144px;top:308.64000000000004px;width:416.6px;height:1.1px;background:#9a9894"></div>
<div class="" style="left:144px;top:320.97px;width:416.6px;height:1.1px;background:#9a9894"></div>
<div class="" style="left:144px;top:333.3px;width:416.6px;height:1.1px;background:#9a9894"></div>
<div class="" style="left:144px;top:345.63px;width:416.6px;height:1.1px;background:#9a9894"></div>
<div class="" style="left:144px;top:357.96000000000004px;width:416.6px;height:1.1px;background:#9a9894"></div>
<div class="" style="left:144px;top:370.29px;width:416.6px;height:1.1px;background:#9a9894"></div>
<div class="" style="left:216.20000000000002px;top:210.9px;width:1.1px;height:160.29px;background:#9a9894"></div>
<div class="" style="left:289.4px;top:210.9px;width:1.1px;height:160.29px;background:#9a9894"></div>
<div class="" style="left:362.59999999999997px;top:210.9px;width:1.1px;height:160.29px;background:#9a9894"></div>
<div class="" style="left:435.79999999999995px;top:210.9px;width:1.1px;height:160.29px;background:#9a9894"></div>
<div class="" style="left:509.0px;top:210.9px;width:1.1px;height:160.29px;background:#9a9894"></div>
<div class="t" style="left:144.1px;top:212.97px;line-height:10px;font-size:6.33px;color:#1b1568;width:71.9px;overflow:hidden;">BOLD</div>
<div class="t" style="left:216.9px;top:212.97px;line-height:10px;font-size:6.33px;color:#1b1568;width:72.29999999999998px;overflow:hidden;">F1</div>
<div class="t" style="left:290.1px;top:212.97px;line-height:10px;font-size:6.33px;color:#1b1568;width:72.29999999999998px;overflow:hidden;">ZTest</div>
<div class="t" style="left:363.3px;top:212.97px;line-height:10px;font-size:6.33px;color:#1b1568;width:72.29999999999998px;overflow:hidden;">11111</div>
<div class="t" style="left:436.5px;top:212.97px;line-height:10px;font-size:6.33px;color:#1b1568;width:72.30000000000004px;overflow:hidden;">Seq Cream Organizer</div>
<div class="t" style="left:509.70000000000005px;top:212.97px;line-height:10px;font-size:6.33px;color:#1b1568;width:50.1px;overflow:hidden;">0000006292</div>
<div class="t" style="left:144.1px;top:225.30px;line-height:10px;font-size:6.33px;color:#1b1568;width:71.9px;overflow:hidden;">BOLD</div>
<div class="t" style="left:216.9px;top:225.30px;line-height:10px;font-size:6.33px;color:#1b1568;width:72.29999999999998px;overflow:hidden;">F1</div>
<div class="t" style="left:290.1px;top:225.30px;line-height:10px;font-size:6.33px;color:#1b1568;width:72.29999999999998px;overflow:hidden;">ZTest</div>
<div class="t" style="left:363.3px;top:225.30px;line-height:10px;font-size:6.33px;color:#1b1568;width:72.29999999999998px;overflow:hidden;">22222</div>
<div class="t" style="left:436.5px;top:225.30px;line-height:10px;font-size:6.33px;color:#1b1568;width:72.30000000000004px;overflow:hidden;">Extreme DVD</div>
<div class="t" style="left:509.70000000000005px;top:225.30px;line-height:10px;font-size:6.33px;color:#1b1568;width:50.1px;overflow:hidden;">0000006293</div>
<div class="t" style="left:144.1px;top:237.62px;line-height:10px;font-size:6.33px;color:#1b1568;width:71.9px;overflow:hidden;">BOLD</div>
<div class="t" style="left:216.9px;top:237.62px;line-height:10px;font-size:6.33px;color:#1b1568;width:72.29999999999998px;overflow:hidden;">F1</div>
<div class="t" style="left:290.1px;top:237.62px;line-height:10px;font-size:6.33px;color:#1b1568;width:72.29999999999998px;overflow:hidden;">ZTest</div>
<div class="t" style="left:363.3px;top:237.62px;line-height:10px;font-size:6.33px;color:#1b1568;width:72.29999999999998px;overflow:hidden;">33333</div>
<div class="t" style="left:436.5px;top:237.62px;line-height:10px;font-size:6.33px;color:#1b1568;width:72.30000000000004px;overflow:hidden;">IPN Open/Close Sign</div>
<div class="t" style="left:509.70000000000005px;top:237.62px;line-height:10px;font-size:6.33px;color:#1b1568;width:50.1px;overflow:hidden;">0000006294</div>
<div class="t" style="left:144.1px;top:249.96px;line-height:10px;font-size:6.33px;color:#1b1568;width:71.9px;overflow:hidden;">BOLD</div>
<div class="t" style="left:216.9px;top:249.96px;line-height:10px;font-size:6.33px;color:#1b1568;width:72.29999999999998px;overflow:hidden;">F1</div>
<div class="t" style="left:290.1px;top:249.96px;line-height:10px;font-size:6.33px;color:#1b1568;width:72.29999999999998px;overflow:hidden;">ZTest</div>
<div class="t" style="left:363.3px;top:249.96px;line-height:10px;font-size:6.33px;color:#1b1568;width:72.29999999999998px;overflow:hidden;">44444</div>
<div class="t" style="left:436.5px;top:249.96px;line-height:10px;font-size:6.33px;color:#1b1568;width:72.30000000000004px;overflow:hidden;">RDK Scratch off card</div>
<div class="t" style="left:509.70000000000005px;top:249.96px;line-height:10px;font-size:6.33px;color:#1b1568;width:50.1px;overflow:hidden;">0000006295</div>
<div class="t" style="left:144.1px;top:262.29px;line-height:10px;font-size:6.33px;color:#1b1568;width:71.9px;overflow:hidden;">BOLD</div>
<div class="t" style="left:216.9px;top:262.29px;line-height:10px;font-size:6.33px;color:#1b1568;width:72.29999999999998px;overflow:hidden;">F1</div>
<div class="t" style="left:290.1px;top:262.29px;line-height:10px;font-size:6.33px;color:#1b1568;width:72.29999999999998px;overflow:hidden;">ZTest</div>
<div class="t" style="left:363.3px;top:262.29px;line-height:10px;font-size:6.33px;color:#1b1568;width:72.29999999999998px;overflow:hidden;">55555</div>
<div class="t" style="left:436.5px;top:262.29px;line-height:10px;font-size:6.33px;color:#1b1568;width:72.30000000000004px;overflow:hidden;">RDK Volume mirror cling</div>
<div class="t" style="left:509.70000000000005px;top:262.29px;line-height:10px;font-size:6.33px;color:#1b1568;width:50.1px;overflow:hidden;">0000006296</div>
<div class="t" style="left:144.1px;top:274.62px;line-height:10px;font-size:6.33px;color:#1b1568;width:71.9px;overflow:hidden;">BOLD</div>
<div class="t" style="left:216.9px;top:274.62px;line-height:10px;font-size:6.33px;color:#1b1568;width:72.29999999999998px;overflow:hidden;">F1</div>
<div class="t" style="left:290.1px;top:274.62px;line-height:10px;font-size:6.33px;color:#1b1568;width:72.29999999999998px;overflow:hidden;">ZTest</div>
<div class="t" style="left:363.3px;top:274.62px;line-height:10px;font-size:6.33px;color:#1b1568;width:72.29999999999998px;overflow:hidden;">CG110100</div>
<div class="t" style="left:436.5px;top:274.62px;line-height:10px;font-size:6.33px;color:#1b1568;width:72.30000000000004px;overflow:hidden;">Consumer Goods Packa...</div>
<div class="t" style="left:509.70000000000005px;top:274.62px;line-height:10px;font-size:6.33px;color:#1b1568;width:50.1px;overflow:hidden;">0000000143</div>
<div class="t" style="left:144.1px;top:286.94px;line-height:10px;font-size:6.33px;color:#1b1568;width:71.9px;overflow:hidden;">BOLD</div>
<div class="t" style="left:216.9px;top:286.94px;line-height:10px;font-size:6.33px;color:#1b1568;width:72.29999999999998px;overflow:hidden;">F1</div>
<div class="t" style="left:290.1px;top:286.94px;line-height:10px;font-size:6.33px;color:#1b1568;width:72.29999999999998px;overflow:hidden;">ZTest</div>
<div class="t" style="left:363.3px;top:286.94px;line-height:10px;font-size:6.33px;color:#1b1568;width:72.29999999999998px;overflow:hidden;">CG110100</div>
<div class="t" style="left:436.5px;top:286.94px;line-height:10px;font-size:6.33px;color:#1b1568;width:72.30000000000004px;overflow:hidden;">Consumer Goods Packa...</div>
<div class="t" style="left:509.70000000000005px;top:286.94px;line-height:10px;font-size:6.33px;color:#1b1568;width:50.1px;overflow:hidden;">0000000143</div>
<div class="t" style="left:144.1px;top:299.28px;line-height:10px;font-size:6.33px;color:#1b1568;width:71.9px;overflow:hidden;">BOLD</div>
<div class="t" style="left:216.9px;top:299.28px;line-height:10px;font-size:6.33px;color:#1b1568;width:72.29999999999998px;overflow:hidden;">F1</div>
<div class="t" style="left:290.1px;top:299.28px;line-height:10px;font-size:6.33px;color:#1b1568;width:72.29999999999998px;overflow:hidden;">ZTest</div>
<div class="t" style="left:363.3px;top:299.28px;line-height:10px;font-size:6.33px;color:#1b1568;width:72.29999999999998px;overflow:hidden;">CG110100</div>
<div class="t" style="left:436.5px;top:299.28px;line-height:10px;font-size:6.33px;color:#1b1568;width:72.30000000000004px;overflow:hidden;">Consumer Goods Packa...</div>
<div class="t" style="left:509.70000000000005px;top:299.28px;line-height:10px;font-size:6.33px;color:#1b1568;width:50.1px;overflow:hidden;">0000000143</div>
<div class="t" style="left:144.1px;top:311.61px;line-height:10px;font-size:6.33px;color:#1b1568;width:71.9px;overflow:hidden;">BOLD</div>
<div class="t" style="left:216.9px;top:311.61px;line-height:10px;font-size:6.33px;color:#1b1568;width:72.29999999999998px;overflow:hidden;">F1</div>
<div class="t" style="left:290.1px;top:311.61px;line-height:10px;font-size:6.33px;color:#1b1568;width:72.29999999999998px;overflow:hidden;">ZTest</div>
<div class="t" style="left:363.3px;top:311.61px;line-height:10px;font-size:6.33px;color:#1b1568;width:72.29999999999998px;overflow:hidden;">ZT1</div>
<div class="t" style="left:436.5px;top:311.61px;line-height:10px;font-size:6.33px;color:#1b1568;width:72.30000000000004px;overflow:hidden;">TEST SKU #1</div>
<div class="t" style="left:509.70000000000005px;top:311.61px;line-height:10px;font-size:6.33px;color:#1b1568;width:50.1px;overflow:hidden;">0000002275</div>
<div class="t" style="left:144.1px;top:323.94px;line-height:10px;font-size:6.33px;color:#1b1568;width:71.9px;overflow:hidden;">BOLD</div>
<div class="t" style="left:216.9px;top:323.94px;line-height:10px;font-size:6.33px;color:#1b1568;width:72.29999999999998px;overflow:hidden;">F1</div>
<div class="t" style="left:290.1px;top:323.94px;line-height:10px;font-size:6.33px;color:#1b1568;width:72.29999999999998px;overflow:hidden;">ZTest</div>
<div class="t" style="left:363.3px;top:323.94px;line-height:10px;font-size:6.33px;color:#1b1568;width:72.29999999999998px;overflow:hidden;">ZT1</div>
<div class="t" style="left:436.5px;top:323.94px;line-height:10px;font-size:6.33px;color:#1b1568;width:72.30000000000004px;overflow:hidden;">TEST SKU #1</div>
<div class="t" style="left:509.70000000000005px;top:323.94px;line-height:10px;font-size:6.33px;color:#1b1568;width:50.1px;overflow:hidden;">0000006307</div>
<div class="t" style="left:144.1px;top:336.26px;line-height:10px;font-size:6.33px;color:#1b1568;width:71.9px;overflow:hidden;">BOLD</div>
<div class="t" style="left:216.9px;top:336.26px;line-height:10px;font-size:6.33px;color:#1b1568;width:72.29999999999998px;overflow:hidden;">F1</div>
<div class="t" style="left:290.1px;top:336.26px;line-height:10px;font-size:6.33px;color:#1b1568;width:72.29999999999998px;overflow:hidden;">ZTest</div>
<div class="t" style="left:363.3px;top:336.26px;line-height:10px;font-size:6.33px;color:#1b1568;width:72.29999999999998px;overflow:hidden;">ZT2</div>
<div class="t" style="left:436.5px;top:336.26px;line-height:10px;font-size:6.33px;color:#1b1568;width:72.30000000000004px;overflow:hidden;">TEST SKU #2</div>
<div class="t" style="left:509.70000000000005px;top:336.26px;line-height:10px;font-size:6.33px;color:#1b1568;width:50.1px;overflow:hidden;">0000002276</div>
<div class="t" style="left:144.1px;top:348.59px;line-height:10px;font-size:6.33px;color:#1b1568;width:71.9px;overflow:hidden;">BOLD</div>
<div class="t" style="left:216.9px;top:348.59px;line-height:10px;font-size:6.33px;color:#1b1568;width:72.29999999999998px;overflow:hidden;">F1</div>
<div class="t" style="left:290.1px;top:348.59px;line-height:10px;font-size:6.33px;color:#1b1568;width:72.29999999999998px;overflow:hidden;">ZTest</div>
<div class="t" style="left:363.3px;top:348.59px;line-height:10px;font-size:6.33px;color:#1b1568;width:72.29999999999998px;overflow:hidden;">ZT3</div>
<div class="t" style="left:436.5px;top:348.59px;line-height:10px;font-size:6.33px;color:#1b1568;width:72.30000000000004px;overflow:hidden;">TEST SKU #3</div>
<div class="t" style="left:509.70000000000005px;top:348.59px;line-height:10px;font-size:6.33px;color:#1b1568;width:50.1px;overflow:hidden;">0000002277</div>
<div class="t" style="left:144.1px;top:360.93px;line-height:10px;font-size:6.33px;color:#1b1568;width:71.9px;overflow:hidden;">BOLD</div>
<div class="t" style="left:216.9px;top:360.93px;line-height:10px;font-size:6.33px;color:#1b1568;width:72.29999999999998px;overflow:hidden;">F1</div>
<div class="t" style="left:290.1px;top:360.93px;line-height:10px;font-size:6.33px;color:#1b1568;width:72.29999999999998px;overflow:hidden;">ZTest</div>
<div class="t" style="left:363.3px;top:360.93px;line-height:10px;font-size:6.33px;color:#1b1568;width:72.29999999999998px;overflow:hidden;">ZT4</div>
<div class="t" style="left:436.5px;top:360.93px;line-height:10px;font-size:6.33px;color:#1b1568;width:72.30000000000004px;overflow:hidden;">test sku #4</div>
<div class="t" style="left:509.70000000000005px;top:360.93px;line-height:10px;font-size:6.33px;color:#1b1568;width:50.1px;overflow:hidden;">0000010254</div>
<div class="" style="left:143.8px;top:392.6px;width:416.8px;height:8.6px;background:#ebe9e5"></div>
<div class="a btn" style="left:143.8px;top:392.6px;width:9.4px;height:8.6px"></div>
<div class="a btn" style="left:153.2px;top:392.6px;width:62.8px;height:8.6px"></div>
<div class="a btn" style="left:551.8px;top:392.6px;width:8.8px;height:8.6px"></div>
<svg class="a" style="left:146.6px;top:395.0px" width="2.8" height="4.4" viewBox="0 0 2.8 4.4"><path d="M2.8 0 L2.8 4.4 L0 2.2 Z" fill="#000"/></svg>
<svg class="a" style="left:555px;top:395.0px" width="2.8" height="4.4" viewBox="0 0 2.8 4.4"><path d="M0 0 L0 4.4 L2.8 2.2 Z" fill="#000"/></svg>
<div class="" style="left:228px;top:122.8px;width:78.80000000000001px;height:77.00000000000001px;background:#fff;border:0.9px solid #000;box-sizing:border-box"></div>
<div class="t" style="left:229px;top:123.20px;line-height:10px;font-size:6.33px;color:#000;">44444</div>
<div class="t" style="left:229px;top:132.60px;line-height:10px;font-size:6.33px;color:#000;">55555</div>
<div class="t" style="left:229px;top:142.00px;line-height:10px;font-size:6.33px;color:#000;">CG110100</div>
<div class="t" style="left:229px;top:151.40px;line-height:10px;font-size:6.33px;color:#000;">ZT1</div>
<div class="t" style="left:229px;top:160.80px;line-height:10px;font-size:6.33px;color:#000;">ZT2</div>
<div class="" style="left:228.9px;top:170.7px;width:68.6px;height:8.8px;background:#0a246a"></div>
<div class="t" style="left:229px;top:170.20px;line-height:10px;font-size:6.33px;color:#fff;">ZT3</div>
<div class="t" style="left:229px;top:179.60px;line-height:10px;font-size:6.33px;color:#000;">ZT4</div>
<div class="t" style="left:229px;top:189.00px;line-height:10px;font-size:6.33px;color:#000;">ZT5</div>
<div class="" style="left:297.4px;top:123.7px;width:8.2px;height:75.20000000000002px;background:#ebe9e5"></div>
<div class="a btn" style="left:297.4px;top:123.7px;width:8.2px;height:9px"></div>
<div class="a btn" style="left:297.4px;top:132.7px;width:8.2px;height:21.5px"></div>
<div class="a btn" style="left:297.4px;top:189.9px;width:8.2px;height:9px"></div>
<svg class="a" style="left:299.4px;top:127.0px" width="4.2" height="2.4" viewBox="0 0 4.2 2.4"><path d="M0 2.4 L4.2 2.4 L2.1 0 Z" fill="#000"/></svg>
<svg class="a" style="left:299.4px;top:193.0px" width="4.2" height="2.4" viewBox="0 0 4.2 2.4"><path d="M0 0 L4.2 0 L2.1 2.4 Z" fill="#000"/></svg>
</div></body></html>
